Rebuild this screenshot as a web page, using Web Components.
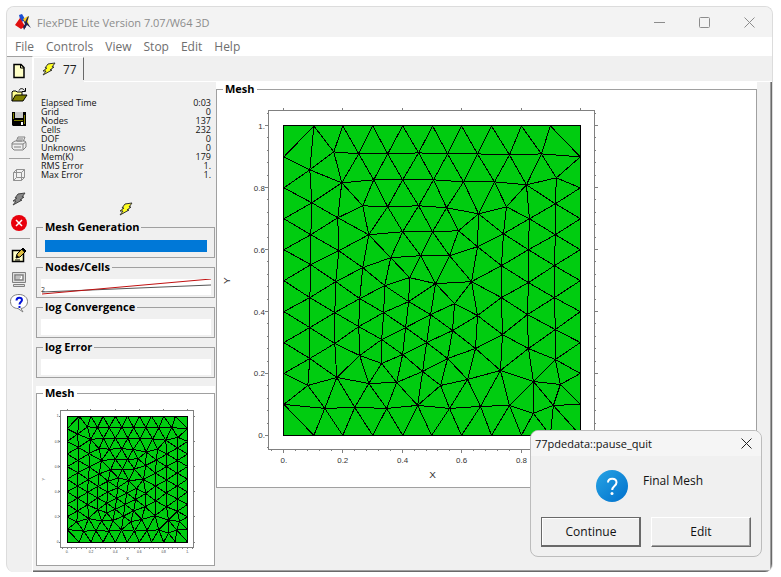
<!DOCTYPE html>
<html lang="en">
<head>
<meta charset="utf-8">
<title>FlexPDE Lite</title>
<style>
    body {
        margin: 0;
        padding: 6px 8px 6px 6px;
        background: #fff;
        color: #111;
        font-family: "Open Sans", "Noto Sans", sans-serif;
        font-size: 12px;
    }
</style>
</head>
<body>
<flex-window></flex-window>

<script>
// interior nodes of the mesh, in plot units (297 wide, 310 high)
const WIDTH = 297
const HEIGHT = 310
const interior = [
    [50,26],[26,44],[75,28],[104,28],[135,27],[58,57],[90,54],[119,54],[150,54],[28,77],
    [79,80],[104,81],[135,80],[54,92],[27,109],[85,109],[119,106],[149,106],[55,125],[27,139],
    [107,132],[137,130],[79,142],
    [164,28],[194,28],[226,29],[258,28],[273,52],[180,56],[211,56],[243,59],[163,82],[195,88],
    [223,81],[272,78],[246,93],[175,105],[220,108],[272,109],[194,121],[166,130],[245,124],
    [218,140],[271,140],
    [52,156],[101,160],[126,152],[152,158],[26,172],[76,173],[125,176],[51,187],[100,187],
    [147,189],[26,202],[75,201],[122,202],[51,218],[98,214],[143,217],[26,233],[76,230],
    [119,229],[139,246],[98,238],[53,252],[85,258],[113,257],[24,260],[41,283],[71,282],
    [103,283],[134,280],
    [188,156],[245,157],[218,172],[271,172],[171,178],[194,190],[244,189],[169,205],[272,204],
    [219,209],[192,223],[245,223],[272,234],[164,233],[184,254],[217,245],[250,256],[277,259],
    [157,260],[166,283],[197,281],[226,280],[250,288],[270,280]
]

function meshNodes() {
    const nodes = interior.map(p => p.slice())
    for (let i = 0; i < 10; i++) {
        const x = Math.round(WIDTH * i / 10)
        const y = Math.round(HEIGHT * i / 10)
        nodes.push([x, 0], [WIDTH, y], [WIDTH - x, HEIGHT], [0, HEIGHT - y])
    }
    return nodes
}

function inCircle(p, a, b, c) {
    const d = 2 * (a[0] * (b[1] - c[1]) + b[0] * (c[1] - a[1]) + c[0] * (a[1] - b[1]))
    const a2 = a[0] * a[0] + a[1] * a[1]
    const b2 = b[0] * b[0] + b[1] * b[1]
    const c2 = c[0] * c[0] + c[1] * c[1]
    const ux = (a2 * (b[1] - c[1]) + b2 * (c[1] - a[1]) + c2 * (a[1] - b[1])) / d
    const uy = (a2 * (c[0] - b[0]) + b2 * (a[0] - c[0]) + c2 * (b[0] - a[0])) / d
    return Math.hypot(p[0] - ux, p[1] - uy) < Math.hypot(a[0] - ux, a[1] - uy) - 1e-6
}

// Bowyer-Watson triangulation, returned as one path of edges
function meshPath() {
    const nodes = meshNodes()
    const n = nodes.length
    const pts = nodes.concat([[-30000, -20000], [31000, -21000], [500, 40000]])
    let tris = [[n, n + 1, n + 2]]
    for (let i = 0; i < n; i++) {
        const edges = new Map()
        tris = tris.filter(t => {
            if (!inCircle(pts[i], pts[t[0]], pts[t[1]], pts[t[2]])) return true
            for (let k = 0; k < 3; k++) {
                const e = [t[k], t[(k + 1) % 3]].sort((a, b) => a - b)
                const key = e.join()
                if (edges.has(key)) edges.delete(key)
                else edges.set(key, e)
            }
            return false
        })
        edges.forEach(e => tris.push([e[0], e[1], i]))
    }
    const done = new Set()
    let d = ''
    tris.filter(t => Math.max(...t) < n).forEach(t => {
        for (let k = 0; k < 3; k++) {
            const e = [t[k], t[(k + 1) % 3]].sort((a, b) => a - b)
            if (done.has(e.join())) continue
            done.add(e.join())
            d += `M${nodes[e[0]]}L${nodes[e[1]]}`
        }
    })
    return d
}

function axes() {
    let d = ''
    let labels = ''
    for (let i = -1; i <= 26; i++) {
        const x = Math.round(WIDTH * i / 25)
        const y = Math.round(HEIGHT - HEIGHT * i / 25)
        const len = i % 5 === 0 ? 4 : 2
        d += `M${x} -15v-${len - 1}M${x} 324v${len}M-15 ${y}h-${len}M311 ${y}h${len}`
        if (i % 5 === 0) {
            const text = i === 0 ? '0.' : i === 25 ? '1.' : (i / 25).toFixed(1)
            labels += `<text x="${x}" y="338" text-anchor="middle">${text}</text>
                <text x="-19" y="${y + 3}" text-anchor="end">${text}</text>`
        }
    }
    return `<path class="axis" d="M-15 -15H311V324H-15Z${d}"/>${labels}`
}

class MeshPlot extends HTMLElement {
    connectedCallback() {
        this.attachShadow({mode: "open"}).innerHTML = `
            <style>
            :host { display: block; }
            svg { display: block; width: 100%; }
            path { fill: none; stroke: #000; vector-effect: non-scaling-stroke; }
            .axis { stroke: #808080; }
            .area { fill: #00cc10; }
            text { font: 8px "Liberation Sans", Arial, sans-serif; fill: #333; }
            .name { font-size: 10px; }
            </style>
            <svg viewBox="${this.getAttribute('view')}" shape-rendering="crispEdges" role="img" aria-label="Mesh">
                ${axes()}
                <path class="area" d="M0 0H${WIDTH}V${HEIGHT}H0Z"/>
                <path d="${meshPath()}"/>
                <text class="name" x="149" y="353" text-anchor="middle">X</text>
                <text class="name" transform="translate(-54 155) rotate(-90)" text-anchor="middle">Y</text>
            </svg>
        `
    }
}

class GroupBox extends HTMLElement {
    connectedCallback() {
        this.attachShadow({mode: "open"}).innerHTML = `
            <style>
            :host { display: block; }
            fieldset {
                margin: 0;
                padding: 0;
                min-width: 0;
                border: 1px solid #a0a0a0;
            }
            legend {
                margin-left: 6px;
                padding: 0 2px;
                font-size: 11px;
                font-weight: bold;
                line-height: 14px;
                color: #000;
            }
            </style>
            <fieldset>
                <legend>${this.getAttribute('label')}</legend>
                <slot></slot>
            </fieldset>
        `
    }
}

const bolt = (fill, line) => `
    <svg width="16" height="16" viewBox="0 0 16 16"><path d="M7 3l7-1-3 4h2l-4 3h2l-9 5 3-4H2l4-3H4z" fill="${fill}" stroke="${line}"/></svg>`

const icons = {
    new: `<path d="M3 1.500h7l3 3v10H3z" fill="#ffffc8" stroke="#000" stroke-width="1.500"/><path d="M9.500 1.500v3.500H13" fill="none" stroke="#000"/>`,
    open: `<path d="M1 14V5l1-1h3l1 1h5v3" fill="#ffff90" stroke="#000"/><path d="M1 14l3.500-6H16l-4 6z" fill="#808000" stroke="#000"/><path d="M8 3.500C9 1 12 1 13.500 3.500M14.500 1v3.500H11" fill="none" stroke="#000"/>`,
    save: `<path d="M1 1h14v14H2l-1-1z" fill="#000"/><path d="M2 2h1v6H2zM13 4h1v9h-1zM3 9h9v1H3z" fill="#808000"/><path d="M4 1h8v6H4z" fill="#c8c8c8"/><path d="M10 11h2v3h-2z" fill="#fff"/>`,
    print: `<g stroke="#808080" fill="#eee"><path d="M5 7l2-5h7l-2 5"/><path d="M1 8l3-2h10l1 2v4l-3 3H3l-2-2z"/><path d="M1 9h11v5M12 9l3-2M3 12h7M7 4h5M6 6h5" fill="none"/></g>`,
    cube: `<path d="M2.500 5.500h8v8h-8zM5.500 2.500h8v8h-8zM2.500 5.500l3-3M10.500 5.500l3-3M10.500 13.500l3-3M2.500 13.500l3-3" fill="none" stroke="#909090"/>`,
    stop: `<circle cx="8" cy="8" r="8" fill="#e8000c"/><path d="M5 5l6 6M11 5l-6 6" stroke="#fff" stroke-width="1.500"/>`,
    edit: `<path d="M1.500 3.500h11v11h-11z" fill="#ffffc8" stroke="#000" stroke-width="1.500"/><path d="M5 11l1-4 6-6 3 3-6 6z" fill="#e0c040" stroke="#000"/><path d="M5 11l1-3 2 2zM12 1l3 3-1.500 1.500-3-3z" fill="#000"/><path d="M4 13h5" stroke="#000"/>`,
    screen: `<g fill="#ddd" stroke="#808080"><path d="M1.500 1.500h13v10h-13z"/><path d="M4 4h8v5H4z" fill="#fff" stroke-width="1.500"/><path d="M2.500 13.500h11v2h-11z"/><path d="M5 6h5M5 8h4" stroke-width="1"/></g>`,
    help: `<path d="M8 -.500c5 0 8.500 3 8.500 7s-3 6.500-6.500 7L12 17l-5-3.500C3 13.500-.500 11-.500 6.500S3-.500 8-.500z" fill="#fff" stroke="#808080"/><path d="M5.500 5.500c0-4 5.500-3.500 5.500-.500C11 7 8.500 7 8.500 9.500" fill="none" stroke="#0010d8" stroke-width="2"/><path d="M7.500 11h2v2h-2z" fill="#0010d8"/>`
}

class ToolBar extends HTMLElement {
    connectedCallback() {
        const tool = (name, label) => `<button aria-label="${label}">${name === 'run'
            ? bolt('#888', '#444')
            : `<svg width="16" height="16" viewBox="0 0 16 16">${icons[name]}</svg>`}</button>`
        this.attachShadow({mode: "open"}).innerHTML = `
            <style>
            :host {
                display: flex;
                flex-direction: column;
                width: 26px;
                padding-top: 2px;
                border-top: 1px solid #a0a0a0;
                border-right: 1px solid #fff;
                box-sizing: border-box;
            }
            button {
                display: grid;
                place-items: center;
                width: 24px;
                height: 24px;
                padding: 0;
                border: 0;
                background: none;
            }
            svg { overflow: visible; }
            hr {
                width: 21px;
                margin: 3px 2px 4px;
                border: 0;
                border-top: 1px solid #a0a0a0;
            }
            </style>
            ${tool('new', 'New')}${tool('open', 'Open')}${tool('save', 'Save')}${tool('print', 'Print')}
            <hr>
            ${tool('cube', 'Domain')}${tool('run', 'Run')}${tool('stop', 'Stop')}
            <hr>
            ${tool('edit', 'Edit')}${tool('screen', 'Plots')}${tool('help', 'Help')}
        `
    }
}

class TitleBar extends HTMLElement {
    connectedCallback() {
        this.attachShadow({mode: "open"}).innerHTML = `
            <style>
            :host {
                display: flex;
                align-items: center;
                height: 30px;
                padding-left: 8px;
                background: #f3f3f3;
                color: #8c8c8c;
                font-size: 11px;
            }
            span { flex: 1; margin-left: 6px; }
            button {
                width: 45px;
                height: 28px;
                padding: 0;
                border: 0;
                background: none;
            }
            button svg { display: block; margin: auto; }
            button path { fill: none; stroke: #8c8c8c; }
            </style>
            <svg width="16" height="16" viewBox="0 0 16 16">
                <path d="M4 1l3-1 3 5-4 4z" fill="#1c4fd0"/>
                <path d="M9 7l5-5-1 5 1 5z" fill="#ffe000"/>
                <path d="M5 4l6 10-2-1-3 2-6-4z" fill="#e01010"/>
                <path d="M14 2l-2 6 4 6-4-3-3 5-1-3 2-3-2-4z" fill="#202050"/>
                <path d="M8 5l5-3-3 6z" fill="#ffd020"/>
            </svg>
            <span><slot></slot></span>
            <button aria-label="Minimize"><svg width="11" height="11"><path d="M0 5.500h11"/></svg></button>
            <button aria-label="Maximize"><svg width="11" height="11"><rect x=".500" y=".500" width="10" height="10" rx="1" fill="none" stroke="#8c8c8c"/></svg></button>
            <button aria-label="Close"><svg width="11" height="11"><path d="M.500 .500l10 10M10.500 .500l-10 10"/></svg></button>
        `
    }
}

class MenuBar extends HTMLElement {
    connectedCallback() {
        const items = ['File', 'Controls', 'View', 'Stop', 'Edit', 'Help']
        this.attachShadow({mode: "open"}).innerHTML = `
            <style>
            :host {
                display: flex;
                gap: 12px;
                height: 19px;
                padding-left: 8px;
                background: #fff;
            }
            button {
                padding: 0;
                border: 0;
                background: none;
                color: #6e6e6e;
                font: inherit;
                line-height: 19px;
            }
            </style>
            ${items.map(item => `<button>${item}</button>`).join('')}
        `
    }
}

class RunStats extends HTMLElement {
    connectedCallback() {
        const rows = [
            ['Elapsed Time', '0:03'], ['Grid', '0'], ['Nodes', '137'],
            ['Cells', '232'], ['DOF', '0'], ['Unknowns', '0'],
            ['Mem(K)', '179'], ['RMS Error', '1.'], ['Max Error', '1.']
        ]
        this.attachShadow({mode: "open"}).innerHTML = `
            <style>
            :host { display: block; padding: 16px 4px 0 5px; }
            table { width: 100%; border-collapse: collapse; }
            th, td {
                height: 9px;
                padding: 0;
                font-size: 9px;
                font-weight: normal;
                line-height: 9px;
                text-align: left;
            }
            td { text-align: right; }
            </style>
            <table>${rows.map(r => `<tr><th scope="row">${r[0]}</th><td>${r[1]}</td></tr>`).join('')}</table>
        `
    }
}

class PauseDialog extends HTMLElement {
    connectedCallback() {
        this.attachShadow({mode: "open"}).innerHTML = `
            <style>
            :host {
                display: block;
                width: 230px;
                border: 1px solid #bcbcbc;
                border-radius: 8px;
                background: #f0f0f0;
                overflow: hidden;
            }
            header {
                display: flex;
                justify-content: space-between;
                align-items: center;
                height: 25px;
                padding: 0 9px 0 4px;
                background: #f5f5f5;
                font-size: 11px;
            }
            header button { padding: 0; border: 0; background: none; }
            header svg { display: block; }
            main {
                display: flex;
                gap: 15px;
                padding: 14px 0 15px 65px;
                line-height: 22px;
            }
            footer {
                display: grid;
                grid-template-columns: 1fr 1fr;
                gap: 10px;
                padding: 0 10px 9px;
            }
            footer button {
                height: 30px;
                padding: 0;
                border: 1px solid;
                border-color: #fff #696969 #696969 #fff;
                box-shadow: inset -1px -1px #a0a0a0;
                background: #f0f0f0;
                color: #111;
                font: inherit;
            }
            footer .default {
                border-color: #696969;
                box-shadow: inset -1px -1px #696969, inset 1px 1px #fff;
            }
            </style>
            <header>
                <span>77pdedata::pause_quit</span>
                <button aria-label="Close"><svg width="11" height="11"><path d="M.500 .500l10 10M10.500 .500l-10 10" stroke="#222"/></svg></button>
            </header>
            <main>
                <svg width="32" height="32" viewBox="0 0 32 32">
                    <defs><linearGradient id="blue" x2="1" y2="1"><stop stop-color="#28a4e4"/><stop offset="1" stop-color="#0070cc"/></linearGradient></defs>
                    <circle cx="16" cy="16" r="16" fill="url(#blue)"/>
                    <path d="M12 12.500c0-5 8.500-5 8.500 0 0 3.500-4.300 3.500-4.300 7.500" fill="none" stroke="#fff" stroke-width="2"/>
                    <circle cx="16" cy="23.500" r="1.500" fill="#fff"/>
                </svg>
                <span>Final Mesh</span>
            </main>
            <footer>
                <button class="default">Continue</button>
                <button>Edit</button>
            </footer>
        `
    }
}

class FlexWindow extends HTMLElement {
    connectedCallback() {
        this.attachShadow({mode: "open"}).innerHTML = `
            <style>
            :host {
                display: block;
                position: relative;
                border: 1px solid #dcdcdc;
                border-bottom: 0;
                border-radius: 8px;
                background: #f0f0f0;
                overflow: hidden;
            }
            .body { display: flex; }
            .sheet { flex: 1; min-width: 0; }
            .tabs {
                display: flex;
                height: 26px;
            }
            .tabs::after { content: ""; flex: 1; border-bottom: 1px solid #fff; }
            .tab {
                display: flex;
                align-items: center;
                gap: 6px;
                width: 51px;
                margin: 1px 0 2px;
                padding: 0 0 0 7px;
                border: 1px solid #fff;
                border-right: 1px solid #696969;
                border-bottom: 0;
                background: none;
                color: #222;
                font: inherit;
            }
            .content {
                display: flex;
                align-items: flex-start;
                padding: 0 14px 5px 3px;
                border-right: 1px solid #696969;
                border-bottom: 1px solid #696969;
                box-shadow: inset -1px -1px #a0a0a0;
            }
            .side {
                display: flex;
                flex-direction: column;
                gap: 1px;
                width: 179px;
                margin-right: 1px;
            }
            .state { display: block; margin: 21px auto 2px; }
            .state svg { display: block; }
            .strip { height: 39px; }
            .chart, progress {
                display: block;
                width: 170px;
                height: 16px;
                margin: 5px 4px 2px;
                background: #fff;
            }
            progress {
                appearance: none;
                width: 162px;
                height: 12px;
                margin: 6px 8px 5px;
                border: 0;
            }
            progress::-webkit-progress-bar { background: #fff; }
            progress::-webkit-progress-value { background: #0078d7; }
            .thumb { margin-top: 6px; background: #fff; }
            .plot { flex: 1; min-width: 0; background: #fff; }
            pause-dialog { position: absolute; right: 10px; bottom: 15px; }
            </style>
            <title-bar>FlexPDE Lite Version 7.07/W64 3D</title-bar>
            <menu-bar></menu-bar>
            <div class="body">
                <tool-bar></tool-bar>
                <div class="sheet">
                    <div class="tabs"><button class="tab">${bolt('#ffff20', '#333')}77</button></div>
                    <div class="content">
                        <div class="side">
                            <run-stats></run-stats>
                            <div class="state">${bolt('#ffff20', '#333')}</div>
                            <group-box class="strip" label="Mesh Generation">
                                <progress value="1" max="1" aria-label="Mesh Generation"></progress>
                            </group-box>
                            <group-box class="strip" label="Nodes/Cells">
                                <svg class="chart" viewBox="0 0 170 16">
                                    <path d="M1 13L170 6" stroke="#555"/>
                                    <path d="M1 15L170 0" stroke="#c01010"/>
                                    <text x="0" y="13" font-size="7" fill="#333">2</text>
                                </svg>
                            </group-box>
                            <group-box class="strip" label="log Convergence"><div class="chart"></div></group-box>
                            <group-box class="strip" label="log Error"><div class="chart"></div></group-box>
                            <group-box class="thumb" label="Mesh"><mesh-plot view="-74 -40 436 406"></mesh-plot></group-box>
                        </div>
                        <group-box class="plot" label="Mesh"><mesh-plot view="-67 -30 540 392"></mesh-plot></group-box>
                    </div>
                </div>
            </div>
            <pause-dialog></pause-dialog>
        `
    }
}

window.customElements.define('mesh-plot', MeshPlot)
window.customElements.define('group-box', GroupBox)
window.customElements.define('tool-bar', ToolBar)
window.customElements.define('title-bar', TitleBar)
window.customElements.define('menu-bar', MenuBar)
window.customElements.define('run-stats', RunStats)
window.customElements.define('pause-dialog', PauseDialog)
window.customElements.define('flex-window', FlexWindow)
</script>
</body>
</html>
